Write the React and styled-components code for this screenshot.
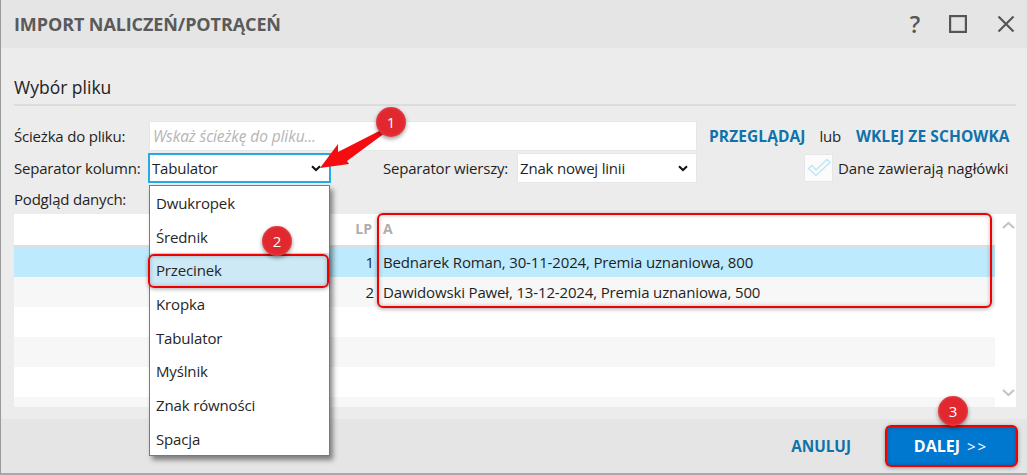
import React from "react";
import styled, { createGlobalStyle } from "styled-components";

const Global = createGlobalStyle`
  html, body { margin: 0; padding: 0; background: #ececec; }
  body { font-family: "Open Sans", "Noto Sans", sans-serif; font-size: 15px; color: #1f1f1f; overflow: hidden; }
  * { box-sizing: border-box; }
`;

const Dialog = styled.div`
  position: relative;
  width: 1027px;
  height: 475px;
  display: flex;
  flex-direction: column;
  background: #ececec;
  border-left: 1px solid #9a9a9a;
  border-bottom: 2px solid #a8a8a8;
  overflow: hidden;
`;
const TitleBar = styled.header`
  height: 48px;
  flex: none;
  background: #e5e5e5;
  display: flex;
  align-items: center;
  padding: 0 12px 0 13px;
`;
const Title = styled.h1`
  flex: 1;
  margin: 0;
  font-size: 18px;
  font-weight: 700;
  color: #5a5a5a;
  letter-spacing: -0.1px;
`;
const WinIcons = styled.div`
  display: flex;
  align-items: center;
  gap: 0;
`;
const HelpMark = styled.span`
  width: 24px;
  margin-right: 22px;
  text-align: center;
  font-size: 23px;
  font-weight: 600;
  line-height: 24px;
  color: #555;
`;
const CloseIcon = styled.svg`
  margin-left: 30px;
`;
const Body = styled.main`
  flex: 1;
  padding: 28px 11px 0 13px;
  display: flex;
  flex-direction: column;
  min-height: 0;
`;
const SectionTitle = styled.h2`
  margin: 0;
  height: 30px;
  font-size: 17.5px;
  line-height: 23px;
  font-weight: 400;
  color: #222;
  border-bottom: 2px solid #dcdcdc;
`;
const FormGrid = styled.div`
  margin-top: 15px;
  display: grid;
  grid-template-columns: 134px 183px 52px 134px 180px 107px 29px 1fr;
  grid-template-rows: 30px 30px;
  row-gap: 2px;
  align-items: center;
`;
const Label = styled.label`
  font-size: 15px;
  line-height: 30px;
  white-space: nowrap;
  letter-spacing: -0.2px;
  grid-column: ${(p) => p.$col || "auto"};
`;
const CheckLabel = styled(Label)`
  padding-left: 5px;
  letter-spacing: -0.08px;
`;
const PathInput = styled.div`
  grid-column: 2 / 6;
  margin-left: 1px;
  height: 30px;
  background: #fff;
  border: 1px solid #e6e6e6;
  padding: 0 3px;
  display: flex;
  align-items: center;
  font-style: italic;
  color: #b5b5b5;
  font-size: 15.5px;
  letter-spacing: -0.1px;
`;
const Select = styled.div`
  height: 30px;
  background: #fff;
  border: ${(p) => (p.$open ? "2px solid #28a8e4" : "1px solid #e6e6e6")};
  padding: 0 8px 0 2px;
  display: flex;
  align-items: center;
  justify-content: space-between;
  font-size: 15px;
  letter-spacing: -0.2px;
`;
const Actions = styled.div`
  grid-column: 6 / 9;
  padding-left: 12px;
  display: flex;
  align-items: center;
  white-space: nowrap;
`;
const LinkButton = styled.a`
  color: #0f72aa;
  font-weight: 700;
  font-size: 15.5px;
  letter-spacing: 0.1px;
`;
const Or = styled.span`
  margin: 0 15px 0 14px;
  font-size: 15px;
  letter-spacing: -0.3px;
`;
const Check = styled.span`
  grid-column: 7;
  width: 29px;
  height: 28px;
  background: #fbfbfb;
  border: 1px solid #e6e6e6;
  display: flex;
  align-items: center;
  justify-content: center;
`;
const PreviewLabel = styled.div`
  height: 30px;
  margin-top: 1px;
  line-height: 30px;
  font-size: 15px;
  letter-spacing: -0.2px;
`;
const Table = styled.section`
  position: relative;
  height: 193px;
  background: #fff;
  padding-right: 21px;
  overflow: hidden;
`;
const HeaderRow = styled.div`
  display: grid;
  grid-template-columns: 360px 1fr;
  height: 33px;
  align-items: center;
  border-bottom: 2px solid #dedede;
  padding-bottom: 2px;
  font-weight: 700;
  color: #aeaeae;
  font-size: 14px;
`;
const LpHead = styled.div`
  text-align: right;
  padding-right: 2px;
`;
const ColHead = styled.div`
  padding-left: 9px;
`;
const Row = styled.div`
  display: grid;
  grid-template-columns: 360px 1fr;
  height: 30px;
  align-items: center;
  background: ${(p) => (p.$selected ? "#bdeafd" : p.$odd ? "#f7f7f7" : "#fff")};
  font-size: 15px;
`;
const Lp = styled.div`
  text-align: right;
`;
const Cell = styled.div`
  padding-left: 9px;
  letter-spacing: -0.15px;
`;
const ScrollUp = styled.svg`
  position: absolute;
  right: 1px;
  top: 7px;
`;
const ScrollDown = styled.svg`
  position: absolute;
  right: 1px;
  top: 175px;
`;
const Footer = styled.footer`
  height: 54px;
  flex: none;
  background: #e5e5e5;
  display: flex;
  align-items: center;
  justify-content: flex-end;
  padding: 0 11px 0 0;
`;
const Cancel = styled.a`
  margin-right: 35px;
  color: #0f72aa;
  font-weight: 700;
  font-size: 15.3px;
`;
const Primary = styled.button`
  width: 130px;
  height: 40px;
  border: 0;
  border-radius: 3px;
  background: #0078cf;
  color: #fff;
  font: 700 16px "Open Sans", sans-serif;
`;
const Chevrons = styled.span`
  margin-left: 7px;
  font-size: 15px;
  font-weight: 400;
  letter-spacing: 2px;
`;
const Menu = styled.ul`
  position: absolute;
  left: 148px;
  top: 185px;
  width: 181px;
  height: 271px;
  margin: 0;
  padding: 0;
  list-style: none;
  background: #fff;
  border: 1px solid #1e96d8;
  box-shadow: 3px 4px 5px rgba(0, 0, 0, 0.45);
`;
const MenuItem = styled.li`
  height: 33.7px;
  padding-left: 6px;
  display: flex;
  align-items: center;
  font-size: 15px;
  letter-spacing: -0.15px;
  color: #262626;
  background: ${(p) => (p.$hot ? "#cde9f6" : "transparent")};
`;
const RedFrame = styled.div`
  position: absolute;
  left: ${(p) => p.$x}px;
  top: ${(p) => p.$y}px;
  width: ${(p) => p.$w}px;
  height: ${(p) => p.$h}px;
  border: 2px solid #f00000;
  border-radius: 6px;
  box-shadow: 0 1px 4px rgba(0, 0, 0, 0.35), inset 0 0 4px rgba(0, 0, 0, 0.25);
  pointer-events: none;
`;
const Badge = styled.div`
  position: absolute;
  left: ${(p) => p.$x - 15}px;
  top: ${(p) => p.$y - 15}px;
  width: 30px;
  height: 30px;
  border-radius: 50%;
  background: #e0282e;
  color: #fff;
  font-size: 15px;
  display: flex;
  align-items: center;
  justify-content: center;
  box-shadow: 0 2px 4px rgba(0, 0, 0, 0.4), inset 0 0 3px rgba(255, 255, 255, 0.25);
`;
const Arrow = styled.svg`
  position: absolute;
  left: 0;
  top: 0;
  pointer-events: none;
`;

const Chevron = () => (
  <svg width="10" height="7" viewBox="0 0 10 7" fill="none" stroke="#111" strokeWidth="2">
    <path d="M1 1.2 L5 5 L9 1.2" />
  </svg>
);

const items = ["Dwukropek", "Średnik", "Przecinek", "Kropka", "Tabulator", "Myślnik", "Znak równości", "Spacja"];

export default function App() {
  return (
    <Dialog>
      <Global />
      <TitleBar>
        <Title>IMPORT NALICZEŃ/POTRĄCEŃ</Title>
        <WinIcons>
          <HelpMark>?</HelpMark>
          <svg width="18" height="18" viewBox="0 0 18 18" fill="none" stroke="#555" strokeWidth="2.2">
            <rect x="1.1" y="1.1" width="15.8" height="15.8" />
          </svg>
          <CloseIcon width="18" height="18" viewBox="0 0 18 18" fill="none" stroke="#555" strokeWidth="2.2">
            <path d="M1.5 1.5 L16.5 16.5 M16.5 1.5 L1.5 16.5" />
          </CloseIcon>
        </WinIcons>
      </TitleBar>
      <Body>
        <SectionTitle>Wybór pliku</SectionTitle>
        <FormGrid>
          <Label>Ścieżka do pliku:</Label>
          <PathInput>Wskaż ścieżkę do pliku...</PathInput>
          <Actions>
            <LinkButton>PRZEGLĄDAJ</LinkButton>
            <Or>lub</Or>
            <LinkButton>WKLEJ ZE SCHOWKA</LinkButton>
          </Actions>
          <Label>Separator kolumn:</Label>
          <Select $open>
            Tabulator
            <Chevron />
          </Select>
          <Label $col="4">Separator wierszy:</Label>
          <Select>
            Znak nowej linii
            <Chevron />
          </Select>
          <Check>
            <svg width="24" height="20" viewBox="0 0 24 20" fill="none" stroke="#bfe7f6" strokeWidth="1.5">
              <path d="M1.5 10.5 L5 7.5 L9 12 L20 1.5 L23 4.5 L9 17.5 Z" />
            </svg>
          </Check>
          <CheckLabel $col="8">Dane zawierają nagłówki</CheckLabel>
        </FormGrid>
        <PreviewLabel>Podgląd danych:</PreviewLabel>
        <Table>
          <HeaderRow>
            <LpHead>LP</LpHead>
            <ColHead>A</ColHead>
          </HeaderRow>
          <Row $selected>
            <Lp>1</Lp>
            <Cell>Bednarek Roman, 30-11-2024, Premia uznaniowa, 800</Cell>
          </Row>
          <Row $odd>
            <Lp>2</Lp>
            <Cell>Dawidowski Paweł, 13-12-2024, Premia uznaniowa, 500</Cell>
          </Row>
          <Row />
          <Row $odd />
          <Row />
          <Row $odd />
          <ScrollUp width="13" height="8" viewBox="0 0 13 8" fill="none" stroke="#c4c4c4" strokeWidth="2.2">
            <path d="M1 7 L6.5 2 L12 7" />
          </ScrollUp>
          <ScrollDown width="13" height="8" viewBox="0 0 13 8" fill="none" stroke="#c4c4c4" strokeWidth="2.2">
            <path d="M1 1 L6.5 6 L12 1" />
          </ScrollDown>
        </Table>
      </Body>
      <Footer>
        <Cancel>ANULUJ</Cancel>
        <Primary>DALEJ<Chevrons>&gt;&gt;</Chevrons></Primary>
      </Footer>
      <Menu>
        {items.map((t) => (
          <MenuItem key={t} $hot={t === "Przecinek"}>{t}</MenuItem>
        ))}
      </Menu>
      <RedFrame $x={376} $y={213} $w={615} $h={95} />
      <RedFrame $x={147} $y={254} $w={181} $h={34} />
      <RedFrame $x={884} $y={425} $w={133} $h={42} />
      <Arrow width="1027" height="475" viewBox="0 0 1027 475">
        <polygon points="319,168 337,144 337,152 386,127 388,130 346,161 348,164" fill="#f40c10" />
      </Arrow>
      <Badge $x={390} $y={122}>1</Badge>
      <Badge $x={276} $y={241}>2</Badge>
      <Badge $x={952} $y={411}>3</Badge>
    </Dialog>
  );
}
